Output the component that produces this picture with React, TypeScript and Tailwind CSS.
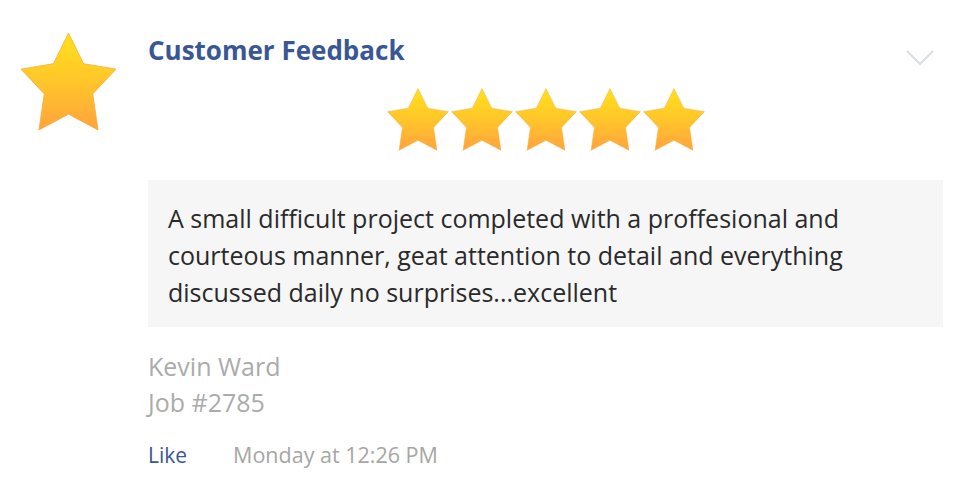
import React from "react";

const StarIcon: React.FC<{ className?: string; id: string }> = ({ className, id }) => (
  <svg viewBox="0 0 100 100" preserveAspectRatio="none" className={className}>
    <defs>
      <linearGradient id={id} x1="0" y1="0" x2="0" y2="1">
        <stop offset="0" stopColor="#ffe11a" />
        <stop offset="0.5" stopColor="#ffc62a" />
        <stop offset="1" stopColor="#ffa33c" />
      </linearGradient>
    </defs>
    <path
      d="M50 1 L65.5 32 L99 37.5 L75 62.5 L80.5 99 L50 83 L19.5 99 L25 62.5 L1 37.5 L34.5 32 Z"
      fill={`url(#${id})`}
      stroke="#f7a93a"
      strokeWidth="0.8"
      strokeLinejoin="round"
    />
  </svg>
);

const App: React.FC = () => {
  return (
    <div
      className="flex w-[980px] h-[480px] bg-white overflow-hidden"
      style={{ fontFamily: '"Open Sans", "Liberation Sans", sans-serif' }}
    >
      {/* big star */}
      <div className="pl-[20px] pt-[32px] shrink-0">
        <StarIcon id="big" className="w-[97px] h-[99px]" />
      </div>

      {/* content */}
      <div className="flex-1 ml-[31px] mr-[37px] pt-[32px]">
        <div className="flex items-start justify-between">
          <h2 className="text-[26px] leading-[36px] font-bold text-[#3a5795]">Customer Feedback</h2>
          <svg viewBox="0 0 28 16" className="w-[28px] h-[16px] mt-[18px] mr-[9px]">
            <path d="M1 1 L14 14 L27 1" fill="none" stroke="#d9dee4" strokeWidth="2" />
          </svg>
        </div>

        <div className="flex justify-center gap-[2px] mt-[20px]">
          {[1, 2, 3, 4, 5].map((n) => (
            <StarIcon key={n} id={`s${n}`} className="w-[62px] h-[63px]" />
          ))}
        </div>

        <div className="mt-[29px] bg-[#f6f6f6] px-[20px] pt-[20px] pb-[16px] text-[25px] leading-[37px] text-[#2a2a2a]">
          A small difficult project completed with a proffesional and
          <br />
          courteous manner, geat attention to detail and everything
          <br />
          discussed daily no surprises...excellent
        </div>

        <div className="mt-[21px] text-[25px] leading-[36px] text-[#ababab]">
          <div>Kevin Ward</div>
          <div>Job #2785</div>
        </div>

        <div className="flex items-baseline gap-[46px] mt-[21px] text-[21px] leading-[28px]">
          <span className="text-[#3a5795]">Like</span>
          <span className="text-[21.5px] text-[#a6a6a6]">Monday at 12:26 PM</span>
        </div>
      </div>
    </div>
  );
};

export default App;
